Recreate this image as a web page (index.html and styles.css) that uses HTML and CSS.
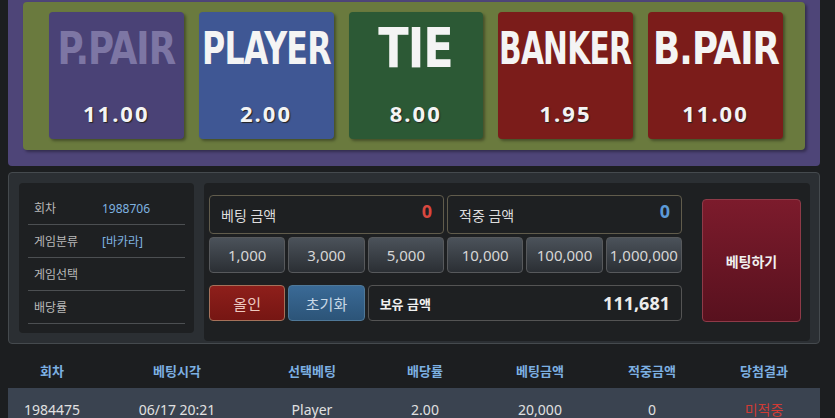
FILE: index.html
```html
<!DOCTYPE html>
<html lang="ko">
<head>
    <meta charset="UTF-8">
    <title>Baccarat Betting</title>
    <link rel="stylesheet" href="styles.css">
</head>
<body>
    <div class="wrap">
        <div class="board">
            <div class="board-inner">
                <div class="pick pick-ppair">
                    <div class="pick-name"><span>P.PAIR</span></div>
                    <div class="pick-odds">11.00</div>
                </div>
                <div class="pick pick-player">
                    <div class="pick-name narrow"><span>PLAYER</span></div>
                    <div class="pick-odds">2.00</div>
                </div>
                <div class="pick pick-tie">
                    <div class="pick-name big"><span>TIE</span></div>
                    <div class="pick-odds">8.00</div>
                </div>
                <div class="pick pick-banker">
                    <div class="pick-name narrower"><span>BANKER</span></div>
                    <div class="pick-odds">1.95</div>
                </div>
                <div class="pick pick-bpair">
                    <div class="pick-name"><span>B.PAIR</span></div>
                    <div class="pick-odds">11.00</div>
                </div>
            </div>
        </div>

        <div class="bet-panel">
            <div class="game-info">
                <div class="info-row"><span class="info-label">회차</span><span class="info-value">1988706</span></div>
                <div class="info-row"><span class="info-label">게임분류</span><span class="info-value">[바카라]</span></div>
                <div class="info-row"><span class="info-label">게임선택</span><span class="info-value"></span></div>
                <div class="info-row"><span class="info-label">배당률</span><span class="info-value"></span></div>
            </div>

            <div class="bet-box">
                <div class="bet-grid">
                    <div class="amount amount-half">
                        <span class="amount-label">베팅 금액</span>
                        <span class="amount-value red">0</span>
                    </div>
                    <div class="amount amount-half">
                        <span class="amount-label">적중 금액</span>
                        <span class="amount-value blue">0</span>
                    </div>

                    <button class="chip">1,000</button>
                    <button class="chip">3,000</button>
                    <button class="chip">5,000</button>
                    <button class="chip">10,000</button>
                    <button class="chip">100,000</button>
                    <button class="chip">1,000,000</button>

                    <button class="chip chip-allin">올인</button>
                    <button class="chip chip-reset">초기화</button>
                    <div class="amount amount-hold">
                        <span class="hold-label">보유 금액</span>
                        <span class="hold-value">111,681</span>
                    </div>
                </div>
                <button class="bet-submit">베팅하기</button>
            </div>
        </div>

        <table class="history">
            <colgroup>
                <col style="width: 88px">
                <col style="width: 162px">
                <col style="width: 108px">
                <col style="width: 118px">
                <col style="width: 112px">
                <col style="width: 112px">
                <col style="width: 112px">
            </colgroup>
            <thead>
                <tr>
                    <th>회차</th>
                    <th>베팅시각</th>
                    <th>선택베팅</th>
                    <th>배당률</th>
                    <th>베팅금액</th>
                    <th>적중금액</th>
                    <th>당첨결과</th>
                </tr>
            </thead>
            <tbody>
                <tr>
                    <td>1984475</td>
                    <td>06/17 20:21</td>
                    <td>Player</td>
                    <td>2.00</td>
                    <td>20,000</td>
                    <td>0</td>
                    <td class="lose">미적중</td>
                </tr>
            </tbody>
        </table>
    </div>
</body>
</html>
```

FILE: styles.css
```css
body {
    margin: 0;
    background: #1c1e20;
    font-family: "Noto Sans", "Noto Sans CJK KR", sans-serif;
    color: #ddd;
    overflow: hidden;
}
.wrap {
    width: 812px;
    margin-left: 8px;
}

/* pick board */
.board {
    background: #4e4578;
    padding: 2px 15px 16px 15px;
    border-radius: 0 0 4px 4px;
}
.board-inner {
    display: flex;
    gap: 15px;
    height: 127px;
    padding: 10px 22px 11px 26px;
    background: #6a7a3e;
    border-radius: 4px;
    box-shadow: 2px 2px 3px rgba(0,0,0,0.35);
}
.pick {
    width: 135px;
    border-radius: 4px;
    display: flex;
    flex-direction: column;
    align-items: center;
    box-shadow: 2px 2px 3px rgba(0,0,0,0.35);
    color: #f4f4f4;
}
.pick-ppair { background: #4a4276; }
.pick-ppair .pick-name { color: #7d76a4; }
.pick-player { background: #3f5794; }
.pick-tie { background: #2c5935; }
.pick-banker { background: #7b1c1a; }
.pick-bpair { background: #7b1c1a; }

.pick-name {
    width: 100%;
    height: 72px;
    display: flex;
    align-items: center;
    justify-content: center;
    font-family: "Liberation Sans Narrow", "DejaVu Sans Condensed", sans-serif;
    font-weight: bold;
    font-size: 44px;
    letter-spacing: -1px;
    white-space: nowrap;
}
.pick-name span {
    display: inline-block;
    transform: scaleX(0.9);
}
.pick-name.narrow span {
    transform: scaleX(0.8);
}
.pick-name.narrower span {
    transform: scaleX(0.75);
}
.pick-name.big {
    font-size: 55px;
}
.pick-odds {
    margin-top: 14px;
    font-size: 22px;
    font-weight: bold;
    letter-spacing: 2px;
    text-shadow: 1px 1px 1px #222;
}

/* bet panel */
.bet-panel {
    margin-top: 6px;
    display: flex;
    align-items: flex-start;
    gap: 10px;
    padding: 10px 9px 2px 10px;
    background: #2b2f33;
    border: 1px solid #454a4e;
    border-radius: 4px;
}
.game-info {
    width: 158px;
    height: 141px;
    padding: 9px 9px 0 9px;
    background: #1e2022;
    border-radius: 4px;
}
.info-row {
    display: flex;
    align-items: center;
    height: 32px;
    padding-left: 6px;
    border-bottom: 1px solid #4c4f52;
    font-size: 12px;
}
.info-label {
    width: 68px;
    color: #b9b9b9;
}
.info-value {
    color: #7fb3e0;
}

.bet-box {
    flex: 1;
    height: 146px;
    display: flex;
    align-items: flex-start;
    gap: 20px;
    padding: 12px 9px 0 5px;
    background: #1e2022;
    border-radius: 4px;
}
.bet-grid {
    width: 473px;
    display: grid;
    grid-template-columns: repeat(6, 1fr);
    grid-template-rows: 39px 36px 36px;
    gap: 3px;
}
.amount {
    display: flex;
    align-items: center;
    justify-content: space-between;
    padding: 0 11px;
    border: 1px solid #615c4c;
    border-radius: 4px;
    background: #1e2022;
}
.amount-half {
    grid-column: span 3;
}
.amount-label {
    font-size: 14px;
    color: #ddd;
}
.amount-value {
    align-self: flex-start;
    margin-top: 3px;
    font-size: 18px;
    font-weight: bold;
}
.red { color: #d9473f; }
.blue { color: #5c9ad8; }

.chip {
    margin: 0;
    padding: 0;
    font-family: inherit;
    font-size: 15px;
    color: #d6d6d6;
    background: linear-gradient(#4b525a, #2b2f34);
    border: 1px solid #57595c;
    border-radius: 4px;
}
.chip-allin,
.chip-reset {
    margin-top: 9px;
    height: 36px;
}
.chip-allin {
    background: linear-gradient(#8e1f1b, #761613);
    border-color: #a5715a;
    color: #eec9c0;
}
.chip-reset {
    background: linear-gradient(#3a6a96, #2c5478);
    border-color: #4f7898;
    color: #c7d8e6;
}
.amount-hold {
    grid-column: span 4;
    margin-top: 9px;
    height: 36px;
    box-sizing: border-box;
    border-color: #545454;
}
.hold-label {
    font-size: 13px;
    font-weight: bold;
    color: #f0f0f0;
}
.hold-value {
    font-size: 18px;
    font-weight: bold;
    color: #ececec;
}

.bet-submit {
    width: 99px;
    height: 123px;
    margin-top: 4px;
    font-family: inherit;
    font-size: 14px;
    font-weight: bold;
    color: #f0f0f0;
    background: linear-gradient(#7c1b2c, #58111e);
    border: 1px solid #8e3a48;
    border-radius: 4px;
}

/* history */
.history {
    width: 812px;
    margin-top: 10px;
    border-collapse: collapse;
    table-layout: fixed;
    font-size: 14px;
}
.history th {
    height: 33px;
    padding: 0 0 1px 0;
    font-size: 13px;
    font-weight: bold;
    color: #7cb0e2;
}
.history td {
    height: 42px;
    padding: 0;
    text-align: center;
    background: #3a4350;
    color: #e0e0e0;
}
.history td.lose {
    color: #cf3b35;
}
```
